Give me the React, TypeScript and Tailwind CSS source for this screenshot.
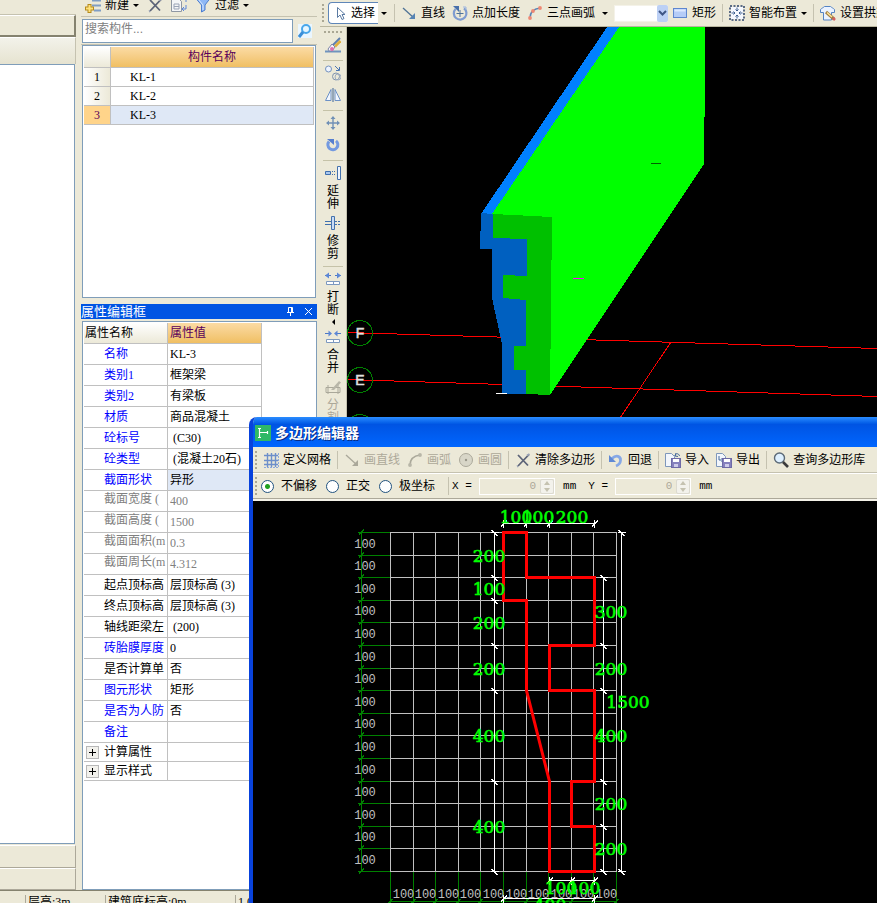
import { useState, type ReactNode } from 'react';

const components = ['KL-1', 'KL-2', 'KL-3'];

type Tone = 'blue' | 'black' | 'gray';

const properties: { name: string; value: string; tone: Tone; active?: boolean }[] = [
  { name: '名称', value: 'KL-3', tone: 'blue' },
  { name: '类别1', value: '框架梁', tone: 'blue' },
  { name: '类别2', value: '有梁板', tone: 'blue' },
  { name: '材质', value: '商品混凝土', tone: 'blue' },
  { name: '砼标号', value: ' (C30)', tone: 'blue' },
  { name: '砼类型', value: ' (混凝土20石)', tone: 'blue' },
  { name: '截面形状', value: '异形', tone: 'blue', active: true },
  { name: '截面宽度 (', value: '400', tone: 'gray' },
  { name: '截面高度 (', value: '1500', tone: 'gray' },
  { name: '截面面积(m', value: '0.3', tone: 'gray' },
  { name: '截面周长(m', value: '4.312', tone: 'gray' },
  { name: '起点顶标高', value: '层顶标高 (3)', tone: 'black' },
  { name: '终点顶标高', value: '层顶标高 (3)', tone: 'black' },
  { name: '轴线距梁左', value: ' (200)', tone: 'black' },
  { name: '砖胎膜厚度', value: '0', tone: 'blue' },
  { name: '是否计算单', value: '否', tone: 'black' },
  { name: '图元形状', value: '矩形', tone: 'blue' },
  { name: '是否为人防', value: '否', tone: 'blue' },
  { name: '备注', value: '', tone: 'blue' },
];

const toneClass: Record<Tone, string> = {
  blue: 'text-[#0000ff]',
  black: 'text-black',
  gray: 'text-[#808080]',
};

function Icon({ children }: { children: ReactNode }) {
  return (
    <svg viewBox="0 0 16 16" className="w-4 h-4 shrink-0" fill="none" aria-hidden="true">
      {children}
    </svg>
  );
}

/* ---------- toolbar icons ---------- */

const NewIcon = () => (
  <Icon>
    <path d="M7 3.500h9M7 8.500h9M9 13.500h7" stroke="#7f9dc4" strokeWidth="2" />
    <path d="M4.500 7v9M0 11.500h9" stroke="#b58a1c" strokeWidth="4" />
    <path d="M4.500 8v7M1 11.500h7" stroke="#ffe27a" strokeWidth="2" />
  </Icon>
);

const CrossIcon = () => (
  <Icon>
    <path d="M3 3l10 10.500M14 2.500L3 14" stroke="#5d6478" strokeWidth="1.800" />
    <path d="M12 3.500l2.500-1.500M3 14l-1 .5" stroke="#9aa3b5" strokeWidth="2" />
  </Icon>
);

const CopyListIcon = () => (
  <Icon>
    <path d="M.5 1.500h7l3 3v10H.5z" fill="#f4f5f7" stroke="#8f97a3" />
    <path d="M3 7h5v5H3zM3 9.500h5" stroke="#9aa3b5" />
    <path d="M11 2h4v3M12 12h3V8M13 10l-2 2 2 2" stroke="#5d86d8" />
  </Icon>
);

const FilterIcon = () => (
  <Icon>
    <path d="M1 1.500h14L10 8v5l-3.500 2V8z" fill="#8fb8f5" stroke="#4d7fd0" />
    <path d="M3.500 2.500L8 8v5" stroke="#d7e7ff" />
  </Icon>
);

const PointerIcon = () => (
  <Icon>
    <path d="M5.500 2.500v10l2.500-2.500 2 4.500 2-1-2-4h3z" fill="#fff" stroke="#5b7ba3" />
  </Icon>
);

const LineIcon = ({ off }: { off?: boolean }) => (
  <Icon>
    <path d="M2 3l11 10" stroke={off ? '#aaa89a' : '#4f7396'} strokeWidth="1.300" />
    <path d="M14 8v6H8z" fill={off ? '#aaa89a' : '#5784b4'} />
  </Icon>
);

const PointLengthIcon = () => (
  <Icon>
    <path d="M3.500 4A6.300 6.300 0 1 0 12 3.300" stroke="#7f9cd0" strokeWidth="2.200" />
    <path d="M1 1h6v6z" fill="#4970aa" />
    <path d="M8 5v7M4.500 8.500h7" stroke="#4f739c" />
    <path d="M11 2h3v3" stroke="#9db5df" />
  </Icon>
);

const ArcIcon = ({ off }: { off?: boolean }) => (
  <Icon>
    <path d="M3 13C3 7.500 6 4 13 3" stroke={off ? '#aaa89a' : '#5784b4'} strokeWidth="1.500" />
    <g fill={off ? '#b8b6a8' : '#ef8874'}>
      <circle cx="3" cy="13" r="1.900" />
      <circle cx="13" cy="3" r="1.900" />
      {!off && <circle cx="6" cy="6" r="1.900" />}
    </g>
  </Icon>
);

const RectIcon = () => (
  <Icon>
    <rect x="1.500" y="3.500" width="13" height="9" fill="#b5ccf7" stroke="#5e86cf" />
    <path d="M2.500 4.500h11v2h-11z" fill="#dce8ff" />
  </Icon>
);

const SmartIcon = () => (
  <Icon>
    <rect x="1" y="1" width="14" height="14" stroke="#5a6b86" strokeWidth="2" strokeDasharray="2 1.500" />
    <path d="M2 2h12v12H2z" fill="#f5f8ff" />
    <path d="M8 2.500V6M8 10v3.500M2.500 8H6M10 8h3.500" stroke="#3d5f8f" />
    <path d="M6.500 4.500L8 6l1.500-1.500M6.500 11.500L8 10l1.500 1.500M4.500 6.500L6 8 4.500 9.500M11.500 6.500L10 8l1.500 1.500" stroke="#3d5f8f" />
  </Icon>
);

const ArchIcon = () => (
  <Icon>
    <path
      d="M.5 7.500V4.500C2 3 3.500 2.500 4.500 1.500h6C11.500 2.500 13 3 14.500 4.500v3h-3v7.500h-8V7.500z"
      fill="#eaf2ff"
      stroke="#5483c4"
    />
    <path d="M6 7l8 7" stroke="#a07c40" strokeWidth="3" />
    <path d="M7 7.500l5 4.500" stroke="#ffe59a" strokeWidth="1.500" />
    <path d="M13 13l2 2" stroke="#d55f5f" strokeWidth="2.500" />
  </Icon>
);

const GridIcon = () => (
  <Icon>
    <path d="M4.500 1v14M8.500 1v14M12.500 1v14M1 3.500h14M1 8.500h14M1 12.500h14" stroke="#6d8fca" strokeWidth="1.400" />
    <path d="M1 15.500h14M15.500 1v14" stroke="#8ea9da" strokeDasharray="2 1" />
  </Icon>
);

const CircleIcon = () => (
  <Icon>
    <circle cx="8" cy="8" r="6.500" fill="#d8d6c8" stroke="#aaa89a" />
    <circle cx="8" cy="8" r="1.200" fill="#99978a" />
  </Icon>
);

const UndoIcon = () => (
  <Icon>
    <path d="M4 6.500C8 2.500 13 4 12.500 8.500 12.300 11 10.500 13 8 14" stroke="#86a8e6" strokeWidth="2.800" />
    <path d="M1 3v7h7z" fill="#6089d4" />
  </Icon>
);

const DiskIcon = ({ out }: { out?: boolean }) => (
  <Icon>
    <path d="M.5 1.500h6l3 3v10h-9z" fill="#f2f6fc" stroke="#7e97bb" />
    {out ? (
      <path d="M3 4v4h4M5.500 6L7.500 8l-2 2" stroke="#43689b" />
    ) : (
      <path d="M10 4c0-3 4-3 4.500 0M11 1l-1 3 3 .5" stroke="#43689b" />
    )}
    <rect x="6.500" y="6.500" width="9" height="9" fill="#8580bd" stroke="#6e6aa6" />
    <path d="M8 7h6v3H8z" fill="#fff" />
    <path d="M9 12h4v3H9z" fill="#cfcdea" />
  </Icon>
);

const SearchIcon = () => (
  <Icon>
    <circle cx="6.500" cy="6" r="5" fill="#def0ff" stroke="#5c6a78" strokeWidth="1.400" />
    <path d="M10 10l5 5" stroke="#3b3b3b" strokeWidth="2.600" />
  </Icon>
);

const BrushIcon = () => (
  <Icon>
    <path d="M0 14.500h16" stroke="#6f93be" strokeWidth="2" />
    <path d="M15 1L8 8" stroke="#5f7fae" strokeWidth="2" />
    <path d="M15.500 4L10 9.500" stroke="#dfae3c" strokeWidth="2.500" />
    <path d="M7 7l3 3-3 4H4l-1-2z" fill="#f5f3fb" stroke="#7d86a8" />
    <circle cx="7" cy="12" r="2" fill="#df6fae" />
  </Icon>
);

const CopyIcon = () => (
  <Icon>
    <circle cx="3.500" cy="4" r="3" fill="#eef4ff" stroke="#7391bd" />
    <circle cx="11" cy="11.500" r="3.500" stroke="#7f93ae" />
    <circle cx="13" cy="12" r="3" stroke="#9fadc0" />
    <path d="M10 1l4 4M14.500 2v3.500H11" stroke="#4b76b2" />
  </Icon>
);

const MirrorIcon = () => (
  <Icon>
    <path d="M6 2.500v11H.5zM10 2.500v11h5.500z" fill="#f2f7ff" stroke="#6c91c6" />
    <path d="M8 1v14" stroke="#3f6496" />
  </Icon>
);

const MoveIcon = () => (
  <Icon>
    <path d="M8 2v12M2 8h12" stroke="#7090b6" strokeWidth="1.400" />
    <path d="M8 1l2.500 3h-5zM8 15l2.500-3h-5zM1 8l3-2.500v5zM15 8l-3-2.500v5z" fill="#7090b6" />
  </Icon>
);

const RotateIcon = () => (
  <Icon>
    <path d="M4 4.500A5 5 0 1 0 11 3.800" stroke="#7399e0" strokeWidth="3" />
    <path d="M2 2h7v6z" fill="#567fcf" />
  </Icon>
);

const ExtendIcon = () => (
  <Icon>
    <path d="M.5 6.500h5v3h-5z" fill="#a9c8ef" stroke="#3f6fae" />
    <path d="M7 6.500h4M7 9.500h4" stroke="#3f6fae" strokeDasharray="1 1" />
    <path d="M12.500 1.500h3v13h-3z" fill="#eef5ff" stroke="#4572ad" />
  </Icon>
);

const TrimIcon = () => (
  <Icon>
    <path d="M0 6.500h6M0 9.500h6" stroke="#3f6fae" />
    <path d="M10 6.500h6M10 9.500h6" stroke="#3f6fae" strokeDasharray="2 1" />
    <path d="M6.500 1.500h3v13h-3z" fill="#c8dcf6" stroke="#4572ad" />
  </Icon>
);

const BreakIcon = ({ merge }: { merge?: boolean }) => (
  <Icon>
    <path d="M0 4.500h6M10 4.500h6" stroke="#4d78c4" />
    <path
      d={merge ? 'M7 4.500L3.500 1.500v6zM9 4.500l3.500-3v6z' : 'M0 4.500l4-3v6zM16 4.500l-4-3v6z'}
      fill="#5c87d6"
    />
    <path d="M1.500 10.500h13v3h-13zM8.500 10v4" fill="#fff" stroke="#7c98bf" />
  </Icon>
);

const SplitIcon = () => (
  <Icon>
    <path d="M1 8.500h14v5H1zM3 6v9M13 6v9" stroke="#aaa89a" />
    <path d="M6 11l8-9 2 1.500-7 7.500z" fill="#b8b6a8" />
  </Icon>
);

/* ---------- small building blocks ---------- */

const Caret = () => (
  <span className="w-0 h-0 border-x-[3px] border-x-transparent border-t-[3px] border-t-black shrink-0" />
);

const Grip = () => (
  <span className="w-[3px] h-[18px] shrink-0 border-l-2 border-dotted border-[#aaa794]" />
);

const Sep = () => <span className="w-px h-[18px] mx-[6px] shrink-0 bg-[#c5c2b0]" />;

const SideSep = () => <span className="w-5 h-px mt-[3px] shrink-0 bg-[#c5c2a8]" />;

function Tool({
  icon,
  label,
  disabled,
  caret,
}: {
  icon: ReactNode;
  label: string;
  disabled?: boolean;
  caret?: boolean;
}) {
  return (
    <button
      disabled={disabled}
      className="flex items-center gap-1 shrink-0 whitespace-nowrap disabled:text-[#aca899]"
    >
      {icon}
      <span>{label}</span>
      {caret && <Caret />}
    </button>
  );
}

function SideTool({
  icon,
  name,
  text,
  disabled,
  caret,
}: {
  icon: ReactNode;
  name: string;
  text?: boolean;
  disabled?: boolean;
  caret?: boolean;
}) {
  return (
    <button
      aria-label={name}
      disabled={disabled}
      className="flex flex-col items-center gap-[2px] shrink-0 disabled:text-[#aca899]"
    >
      <span className="h-5 flex items-center">{icon}</span>
      {text && <span className="w-3 leading-[13px] break-all">{name}</span>}
      {caret && (
        <span className="w-0 h-0 border-y-[3px] border-y-transparent border-r-[3px] border-r-black" />
      )}
    </button>
  );
}

/* ---------- left column ---------- */

function NavigatorStub() {
  return (
    <aside className="w-[76px] shrink-0 flex flex-col">
      <div className="h-[15px] shrink-0 border-b border-[#c5c2b0]" />
      <div className="h-[22px] shrink-0 border-t border-r-2 border-b-2 border-t-white border-[#85826f]" />
      <div className="h-[27px] shrink-0 border-t border-r border-t-white border-[#c5c2b0] bg-linear-to-b from-[#f3f2ea] to-[#e6e3d0]" />
      <div className="flex-1 bg-white border-t border-r border-b border-[#7f9db9] mr-px" />
      <div className="h-[23px] shrink-0 mt-px border-t border-r border-b border-t-white border-[#aca899]" />
      <div className="h-[22px] shrink-0 border-t border-r border-b border-t-white border-[#aca899]" />
    </aside>
  );
}

function ComponentList() {
  const [selected, setSelected] = useState(2);

  return (
    <section className="shrink-0">
      <div className="h-[17px] overflow-hidden border-b border-[#c5c2b0]">
        <div className="-mt-[7px] h-6 flex items-center pl-[4px] gap-[8px]">
          <Tool icon={<NewIcon />} label="新建" caret />
          <button aria-label="删除">
            <CrossIcon />
          </button>
          <button aria-label="复制">
            <CopyListIcon />
          </button>
          <Tool icon={<FilterIcon />} label="过滤" caret />
        </div>
      </div>

      <div className="flex items-center h-[27px] mt-px border-b border-[#c5c2b0]">
        <input
          aria-label="搜索构件"
          placeholder="搜索构件..."
          className="flex-1 min-w-0 h-6 ml-px pl-[2px] pb-1 bg-white border border-[#7f9db9] placeholder:text-[#808080] outline-none"
        />
        <button aria-label="搜索" className="mx-[5px] w-[14px] h-[14px] bg-[#eaf6ff]">
          <svg viewBox="0 0 14 14" fill="none">
            <circle cx="8" cy="5" r="4" stroke="#49a7ea" strokeWidth="2" fill="#e6f6ff" />
            <path d="M5 8l-4 5" stroke="#3b8fd8" strokeWidth="3" />
          </svg>
        </button>
      </div>

      <div className="h-[253px] ml-px mr-px border border-[#7f9db9] bg-white p-px">
        <table className="w-full table-fixed border-separate border-spacing-0">
          <thead>
            <tr className="h-[21px]">
              <th className="w-[27px] p-0 border-r border-b border-[#c0c0c0] bg-linear-to-b from-white to-[#ece9d8]" />
              <th className="p-0 border-r border-b border-[#c0c0c0] font-normal text-[#5a005a] bg-linear-to-b from-[#fbdba4] to-[#f0bf62]">
                构件名称
              </th>
            </tr>
          </thead>
          <tbody>
            {components.map((name, i) => (
              <tr
                key={name}
                className="h-[19px] font-['Liberation_Serif']"
                onClick={() => setSelected(i)}
              >
                <td
                  className={`p-0 border-r border-b border-[#c0c0c0] text-center ${
                    selected === i
                      ? 'bg-[#ffd48a] text-[#5a005a]'
                      : 'bg-linear-to-r from-white to-[#ece9d8]'
                  }`}
                >
                  {i + 1}
                </td>
                <td
                  className={`p-0 pl-[19px] border-r border-b border-[#c0c0c0] ${
                    selected === i ? 'bg-[#dfe8f6]' : ''
                  }`}
                >
                  {name}
                </td>
              </tr>
            ))}
          </tbody>
        </table>
      </div>
    </section>
  );
}

function PropertyEditor() {
  return (
    <section className="flex-1 min-h-0 flex flex-col mt-[6px]">
      <div className="h-[15px] shrink-0 flex items-center bg-[#0054e3] text-white">
        <h2 className="flex-1 text-[13px]">属性编辑框</h2>
        <button aria-label="固定" className="w-[18px] flex justify-center">
          <svg viewBox="0 0 9 9" className="w-[9px] h-[9px]" fill="none" stroke="#fff">
            <path d="M2.500 5V.5h4V5M5.500 1v4M1 5.500h7M4.500 6v3" />
          </svg>
        </button>
        <button aria-label="关闭" className="w-[18px] flex justify-center">
          <svg viewBox="0 0 9 9" className="w-[9px] h-[9px]" fill="none" stroke="#fff">
            <path d="M1 1l7 7M8 1L1 8" />
          </svg>
        </button>
      </div>

      <div className="flex-1 min-h-0 mt-[2px] ml-px overflow-hidden border border-[#7f9db9] bg-white p-px">
        <table className="w-[178px] table-fixed border-separate border-spacing-0 whitespace-nowrap font-['Liberation_Serif','Noto_Sans_CJK_SC',serif]">
          <thead>
            <tr className="h-[21px] text-left">
              <th className="w-[84px] p-0 pl-px font-normal border-r border-b border-[#c0c0c0] bg-linear-to-b from-white to-[#ece9d8]">
                属性名称
              </th>
              <th className="p-0 pl-[2px] font-normal text-[#5a005a] border-r border-b border-[#c0c0c0] bg-linear-to-b from-[#fbdba4] to-[#f0bf62]">
                属性值
              </th>
            </tr>
          </thead>
          <tbody>
            {properties.map((p) => (
              <tr key={p.name} className="h-[21px]">
                <td
                  className={`p-0 pl-5 overflow-hidden border-r border-b border-[#c0c0c0] ${toneClass[p.tone]} ${
                    p.tone === 'gray' ? 'align-top' : ''
                  }`}
                >
                  {p.name}
                </td>
                <td
                  className={`p-0 pl-[2px] overflow-hidden whitespace-pre border-r border-b border-[#c0c0c0] ${
                    p.tone === 'gray' ? 'text-[#808080]' : 'text-black'
                  } ${p.active ? 'bg-[#dfe8f6]' : ''}`}
                >
                  {p.value}
                </td>
              </tr>
            ))}
            {['计算属性', '显示样式'].map((name) => (
              <tr key={name} className="h-[19px]">
                <td className="p-0 pl-[2px] border-r border-b border-[#c0c0c0]">
                  <div className="flex items-center gap-[5px]">
                    <button
                      aria-label={`展开${name}`}
                      className="w-[13px] h-[13px] flex items-center justify-center border border-[#b8b8b8] bg-[#f2f1ec]"
                    >
                      <svg viewBox="0 0 7 7" className="w-[7px] h-[7px]" stroke="#000">
                        <path d="M0 3.500h7M3.500 0v7" />
                      </svg>
                    </button>
                    {name}
                  </div>
                </td>
                <td className="p-0 border-r border-b border-[#c0c0c0]" />
              </tr>
            ))}
          </tbody>
        </table>
      </div>
    </section>
  );
}

/* ---------- drawing toolbar and 3D view ---------- */

function DrawToolbar() {
  return (
    <div className="h-[27px] shrink-0 flex items-center pl-[2px] overflow-hidden border-b border-[#b9b69f] bg-[#ece9d8]">
      <Grip />
      <button className="ml-[3px] w-[50px] h-[22px] shrink-0 flex items-center pl-[3px] gap-[3px] whitespace-nowrap rounded-l border border-r-0 border-[#5f86b8] bg-white">
        <PointerIcon />
        选择
      </button>
      <span className="w-[12px] shrink-0 flex justify-center">
        <Caret />
      </span>
      <span className="ml-[4px] mr-[6px] w-px h-[18px] shrink-0 bg-[#c5c2b0]" />
      <div className="flex items-center gap-[7px] shrink-0">
        <Tool icon={<LineIcon />} label="直线" />
        <Tool icon={<PointLengthIcon />} label="点加长度" />
        <Tool icon={<ArcIcon />} label="三点画弧" />
        <Caret />
      </div>
      <div className="flex items-center gap-[4px] ml-[6px] shrink-0">
        <div className="relative w-[54px] h-[17px] shrink-0">
          <select
            aria-label="弧类型"
            className="appearance-none w-full h-full bg-white border border-[#f4f2e8] outline-none"
          >
            <option></option>
          </select>
          <span className="pointer-events-none absolute right-0 top-0 w-[11px] h-full flex items-center justify-center rounded-xs bg-[#bcd0f5]">
            <svg viewBox="0 0 9 6" className="w-[9px] h-[6px]" fill="none">
              <path d="M1 1l3.500 3.500L8 1" stroke="#3f5685" strokeWidth="2" />
            </svg>
          </span>
        </div>
        <Tool icon={<RectIcon />} label="矩形" />
      </div>
      <Sep />
      <Tool icon={<SmartIcon />} label="智能布置" caret />
      <Sep />
      <Tool icon={<ArchIcon />} label="设置拱梁" />
    </div>
  );
}

function EditToolbar() {
  return (
    <div className="w-[27px] shrink-0 flex flex-col items-center gap-[2px] overflow-hidden border-r border-[#c5c2b0] bg-[#ece9d8]">
      <span className="w-[18px] h-[6px] shrink-0 border-b-2 border-dotted border-[#aaa794]" />
      <SideTool icon={<BrushIcon />} name="格式刷" />
      <SideSep />
      <SideTool icon={<CopyIcon />} name="复制" />
      <SideTool icon={<MirrorIcon />} name="镜像" />
      <SideSep />
      <SideTool icon={<MoveIcon />} name="移动" />
      <SideTool icon={<RotateIcon />} name="旋转" />
      <SideSep />
      <SideTool icon={<ExtendIcon />} name="延伸" text />
      <SideTool icon={<TrimIcon />} name="修剪" text />
      <SideSep />
      <SideTool icon={<BreakIcon />} name="打断" text caret />
      <SideTool icon={<BreakIcon merge />} name="合并" text />
      <SideTool icon={<SplitIcon />} name="分割" text disabled />
    </div>
  );
}

function ModelView() {
  return (
    <div className="flex-1 min-w-0 bg-black overflow-hidden">
      <svg className="w-full h-full" shapeRendering="crispEdges">
        <g transform="translate(-347 -27)">
          <path
            d="M347 332.500L877 348.500M347 379.500L877 396.500M671 342L612 430"
            fill="none"
            stroke="#ff0000"
          />
          <path d="M607 27h13L493 215l-12-1z" fill="#0080ff" />
          <path d="M619 27h86.500L704 164 550 395V217l-58-3z" fill="#00ff00" />
          <path
            d="M481 213l12 1v23l35 1v156h-26v-50l-10-46v-49h-12z"
            fill="#0060c0"
          />
          <path
            d="M493 214l59 3-2 178-24-1v-24h-12v-24h12v-46l-23-2v-23l24 1v-37l-34-1z"
            fill="#00c000"
          />
          <path d="M496 393.500h11" stroke="#fff" />
          <path d="M573 278.500h11" stroke="#ff00ff" />
          <path d="M651 163.500h10" stroke="#006000" />
          {[
            ['F', 333],
            ['E', 380],
            ['D', 427],
          ].map(([axis, y]) => (
            <g key={axis}>
              <circle cx="360" cy={y} r="12.500" fill="none" stroke="#008000" />
              <text
                x="360"
                y={Number(y) + 5}
                textAnchor="middle"
                fill="#e0e0e0"
                stroke="#e0e0e0"
                strokeWidth="0.500"
                fontSize="14"
                fontFamily="Liberation Sans"
              >
                {axis}
              </text>
            </g>
          ))}
        </g>
      </svg>
    </div>
  );
}

/* ---------- polygon editor ---------- */

const STEP = 22.6;
const gridX = Array.from({ length: 11 }, (_, i) => Math.round(390 + i * STEP) + 0.5);
const gridY = Array.from({ length: 16 }, (_, i) => Math.round(532 + i * STEP) + 0.5);

const verticalDims = [
  { x: 494.5, stops: [532, 577, 600, 645, 690, 781, 871] },
  { x: 603.5, stops: [577, 645, 690, 781, 826, 871] },
  { x: 621.5, stops: [532, 871] },
];

const horizontalDims = [
  { y: 523.5, stops: [503, 526, 549, 594] },
  { y: 880.5, stops: [549, 571, 594] },
  { y: 898.5, stops: [503, 594] },
];

const dimLabels: [string, number, number][] = [
  ['100', 516, 517],
  ['100', 538, 517],
  ['200', 572, 517],
  ['200', 489, 556],
  ['100', 489, 589],
  ['200', 489, 623],
  ['200', 489, 669],
  ['400', 489, 736],
  ['400', 489, 827],
  ['300', 611, 612],
  ['200', 611, 669],
  ['1500', 628, 702],
  ['400', 611, 736],
  ['200', 611, 804],
  ['200', 611, 849],
  ['100', 561, 888],
  ['100', 584, 888],
  ['400', 550, 905],
];

function PolygonCanvas() {
  return (
    <div className="flex-1 min-h-0 bg-black overflow-hidden">
      <svg className="w-full h-full" fill="none">
        <g transform="translate(-253 -501)">
          <g shapeRendering="crispEdges">
            <g stroke="#008000">
              <path d="M361.500 532V872M390 901.500H617" />
              {gridY.map((y) => (
                <path key={y} d={`M358 ${y}H390M359 ${y + 2}l5 -5`} />
              ))}
              {gridX.map((x) => (
                <path key={x} d={`M${x} 872V903M${x - 2} 903l4 -4`} />
              ))}
            </g>
            <g stroke="#c0c0c0">
              {gridX.map((x) => (
                <path key={x} d={`M${x} 532V872`} />
              ))}
              {gridY.map((y) => (
                <path key={y} d={`M390 ${y}H617`} />
              ))}
            </g>
            <g stroke="#fff">
              {verticalDims.map(({ x, stops }) => (
                <g key={x}>
                  <path d={`M${x} ${stops[0]}V${stops[stops.length - 1]}`} />
                  {stops.map((s) => (
                    <path key={s} d={`M${x - 3} ${s - 2}l6 6M${x - 4} ${s + 0.5}h8`} />
                  ))}
                </g>
              ))}
              {horizontalDims.map(({ y, stops }) => (
                <g key={y}>
                  <path d={`M${stops[0]} ${y}H${stops[stops.length - 1]}`} />
                  {stops.map((s) => (
                    <path key={s} d={`M${s - 2} ${y + 3}l6 -6M${s + 0.5} ${y - 4}v8`} />
                  ))}
                </g>
              ))}
            </g>
          </g>

          <g fill="#c0c0c0" fontSize="12" fontFamily="Liberation Mono" textAnchor="middle">
            {gridY.slice(1).map((y) => (
              <text key={y} x="365" y={y - 8}>
                100
              </text>
            ))}
            {gridX.slice(1).map((x) => (
              <text key={x} x={x - 10} y="898">
                100
              </text>
            ))}
          </g>

          <path
            d="M503.500 532.500H526.500V577.500H594.500V645.500H549.500V690.500H594.500V781.500H571.500V826.500H594.500V871.500H549.500V781.500L526.500 690.500V600.500H503.500Z"
            stroke="#ff0000"
            strokeWidth="3"
          />

          <g
            fill="#00ff00"
            stroke="#00ff00"
            strokeWidth="0.600"
            fontSize="17"
            fontFamily="DejaVu Serif"
            textAnchor="middle"
          >
            {dimLabels.map(([label, x, y]) => (
              <text key={`${x}-${y}`} x={x} y={y + 6}>
                {label}
              </text>
            ))}
          </g>
        </g>
      </svg>
    </div>
  );
}

function OffsetField({ axis }: { axis: string }) {
  return (
    <div className="flex items-center shrink-0 font-['Liberation_Mono']">
      <label htmlFor={`offset-${axis}`} className="w-[27px] whitespace-pre text-[11px]">
        {axis} =
      </label>
      <div className="w-[76px] h-[17px] flex border border-white">
        <input
          id={`offset-${axis}`}
          disabled
          defaultValue="0"
          className="flex-1 min-w-0 pr-1 text-right text-[11px] text-[#aca899]"
        />
        <span className="w-[14px] flex flex-col items-center justify-center gap-[3px] rounded-xs border border-[#dcdad0] bg-[#f3f2ec]">
          <span className="w-0 h-0 border-x-[3px] border-x-transparent border-b-[4px] border-b-[#c5c2b0]" />
          <span className="w-0 h-0 border-x-[3px] border-x-transparent border-t-[4px] border-t-[#c5c2b0]" />
        </span>
      </div>
      <span className="ml-[8px] text-[11px]">mm</span>
    </div>
  );
}

function PolygonEditor() {
  const [mode, setMode] = useState('不偏移');

  return (
    <div
      role="dialog"
      aria-label="多边形编辑器"
      className="absolute left-[249px] right-0 top-[417px] bottom-0 flex flex-col overflow-hidden rounded-tl-lg border-l-4 border-[#0842dc] bg-[#ece9d8]"
    >
      <div className="h-[30px] shrink-0 flex items-center gap-1 pl-[2px] pt-[2px] bg-linear-to-b from-[#2a8cff] via-[#0054e3] via-25% to-[#0066ff]">
        <svg viewBox="0 0 16 16" className="w-4 h-4" fill="none">
          <path d="M0 0h16v16H0z" fill="#2fb866" />
          <path d="M4.500 3v10M3 3.500h3M3 12.500h3M5 7.500h8M12.500 6v3" stroke="#fff" strokeWidth="1.200" />
        </svg>
        <h1 className="text-sm font-bold text-white [text-shadow:1px_1px_0_#0a2a80]">多边形编辑器</h1>
      </div>

      <div className="h-[26px] shrink-0 flex items-center pl-[2px] overflow-hidden border-b border-[#c5c2b0]">
        <Grip />
        <span className="w-[5px] shrink-0" />
        <Tool icon={<GridIcon />} label="定义网格" />
        <Sep />
        <div className="flex items-center gap-[7px] shrink-0">
          <Tool icon={<LineIcon off />} label="画直线" disabled />
          <Tool icon={<ArcIcon off />} label="画弧" disabled />
          <Tool icon={<CircleIcon />} label="画圆" disabled />
        </div>
        <Sep />
        <Tool icon={<CrossIcon />} label="清除多边形" />
        <Sep />
        <Tool icon={<UndoIcon />} label="回退" />
        <Sep />
        <div className="flex items-center gap-[7px] shrink-0">
          <Tool icon={<DiskIcon />} label="导入" />
          <Tool icon={<DiskIcon out />} label="导出" />
        </div>
        <Sep />
        <Tool icon={<SearchIcon />} label="查询多边形库" />
      </div>

      <div className="h-[26px] shrink-0 flex items-center pl-[2px] overflow-hidden border-t border-b border-t-white border-[#aca899]">
        <Grip />
        <div className="flex items-center gap-[9px] ml-[3px] shrink-0">
          {['不偏移', '正交', '极坐标'].map((m) => (
            <label key={m} className="flex items-center gap-[7px] whitespace-nowrap">
              <input
                type="radio"
                name="mode"
                checked={mode === m}
                onChange={() => setMode(m)}
                className="appearance-none w-[13px] h-[13px] rounded-full border border-[#21527f] bg-white checked:bg-[radial-gradient(#21a121_0_2px,#fff_3px)]"
              />
              {m}
            </label>
          ))}
        </div>
        <span className="ml-[13px] mr-[3px] w-px h-[18px] shrink-0 bg-[#c5c2b0]" />
        <div className="flex items-center gap-[12px]">
          <OffsetField axis="X" />
          <OffsetField axis="Y" />
        </div>
      </div>
      <div className="h-[2px] shrink-0 bg-[#f4f2e8]" />

      <PolygonCanvas />
    </div>
  );
}

function StatusBar() {
  return (
    <footer className="h-[13px] shrink-0 flex overflow-hidden border-t border-[#85826f] pt-[4px] whitespace-nowrap leading-[14px] font-['Liberation_Serif','Noto_Sans_CJK_SC',serif]">
      <span className="w-[26px] shrink-0 border-r border-[#aca899]" />
      <span className="w-[80px] shrink-0 pl-[2px] border-r border-[#aca899]">层高:3m</span>
      <span className="w-[130px] shrink-0 pl-[2px] border-r border-[#aca899]">建筑底标高:0m</span>
      <span className="pl-[2px]">1.0</span>
    </footer>
  );
}

export default function App() {
  return (
    <main className="relative h-screen flex flex-col overflow-hidden bg-[#ece9d8] text-black text-[12px] leading-4 font-['Liberation_Sans','Noto_Sans_CJK_SC',sans-serif]">
      <div className="flex-1 min-h-0 flex">
        <NavigatorStub />
        <div className="w-[236px] ml-[5px] shrink-0 flex flex-col">
          <ComponentList />
          <PropertyEditor />
        </div>
        <div className="flex-1 min-w-0 flex flex-col ml-[3px]">
          <DrawToolbar />
          <div className="flex-1 min-h-0 flex">
            <EditToolbar />
            <ModelView />
          </div>
        </div>
      </div>
      <StatusBar />
      <PolygonEditor />
    </main>
  );
}
